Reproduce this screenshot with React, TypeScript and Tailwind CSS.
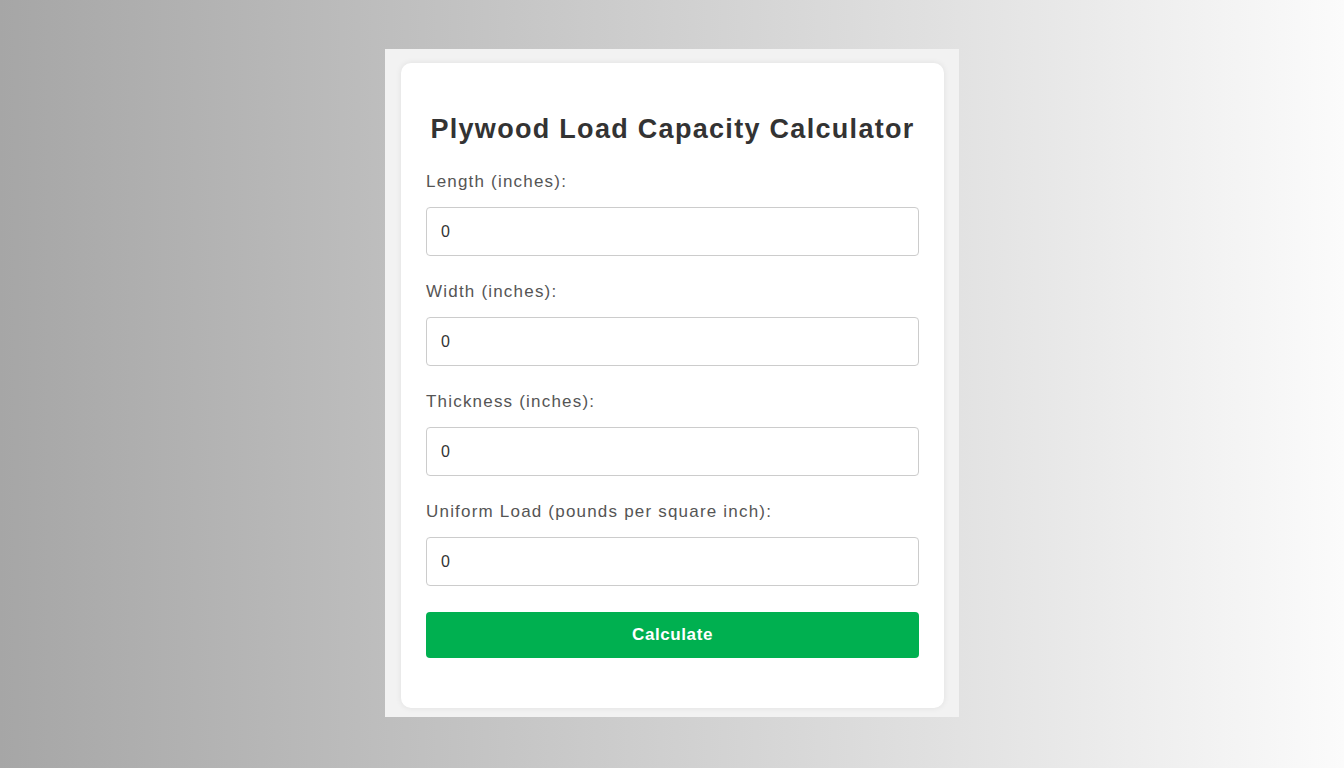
const fields = [
    "Length (inches):",
    "Width (inches):",
    "Thickness (inches):",
    "Uniform Load (pounds per square inch):",
];

export default function App() {
    return (
        <div
            className="min-h-screen w-full flex items-center justify-center bg-gradient-to-r from-[#a6a6a6] to-[#fbfbfb]"
            style={{ fontFamily: '"Liberation Sans", Arial, sans-serif' }}
        >
            <div className="w-[574px] h-[668px] -mt-[2px] bg-[#f2f2f2] pt-[14px] pl-4 pr-[15px] pb-2">
                <div className="bg-white rounded-[10px] shadow-[0_0_6px_rgba(0,0,0,0.08)] px-[25px] pt-[51px] pb-[50px]">
                    <h2 className="text-[27px] leading-[30px] font-bold tracking-[1.3px] text-[#333] text-center">
                        Plywood Load Capacity Calculator
                    </h2>
                    <div className="mt-[28px] flex flex-col gap-[26px]">
                        {fields.map((label) => (
                            <div key={label} className="flex flex-col gap-[15px]">
                                <label className="text-[17px] leading-[20px] tracking-[1.2px] text-[#555]">
                                    {label}
                                </label>
                                <input
                                    type="number"
                                    defaultValue={0}
                                    className="h-[49px] w-full border border-[#ccc] rounded-[4px] px-[14px] text-[16px] text-[#333] outline-none"
                                />
                            </div>
                        ))}
                        <button className="h-[46px] w-full rounded-[4px] bg-[#00b050] text-white text-[17px] tracking-[0.6px] font-bold">
                            Calculate
                        </button>
                    </div>
                </div>
            </div>
        </div>
    );
}
